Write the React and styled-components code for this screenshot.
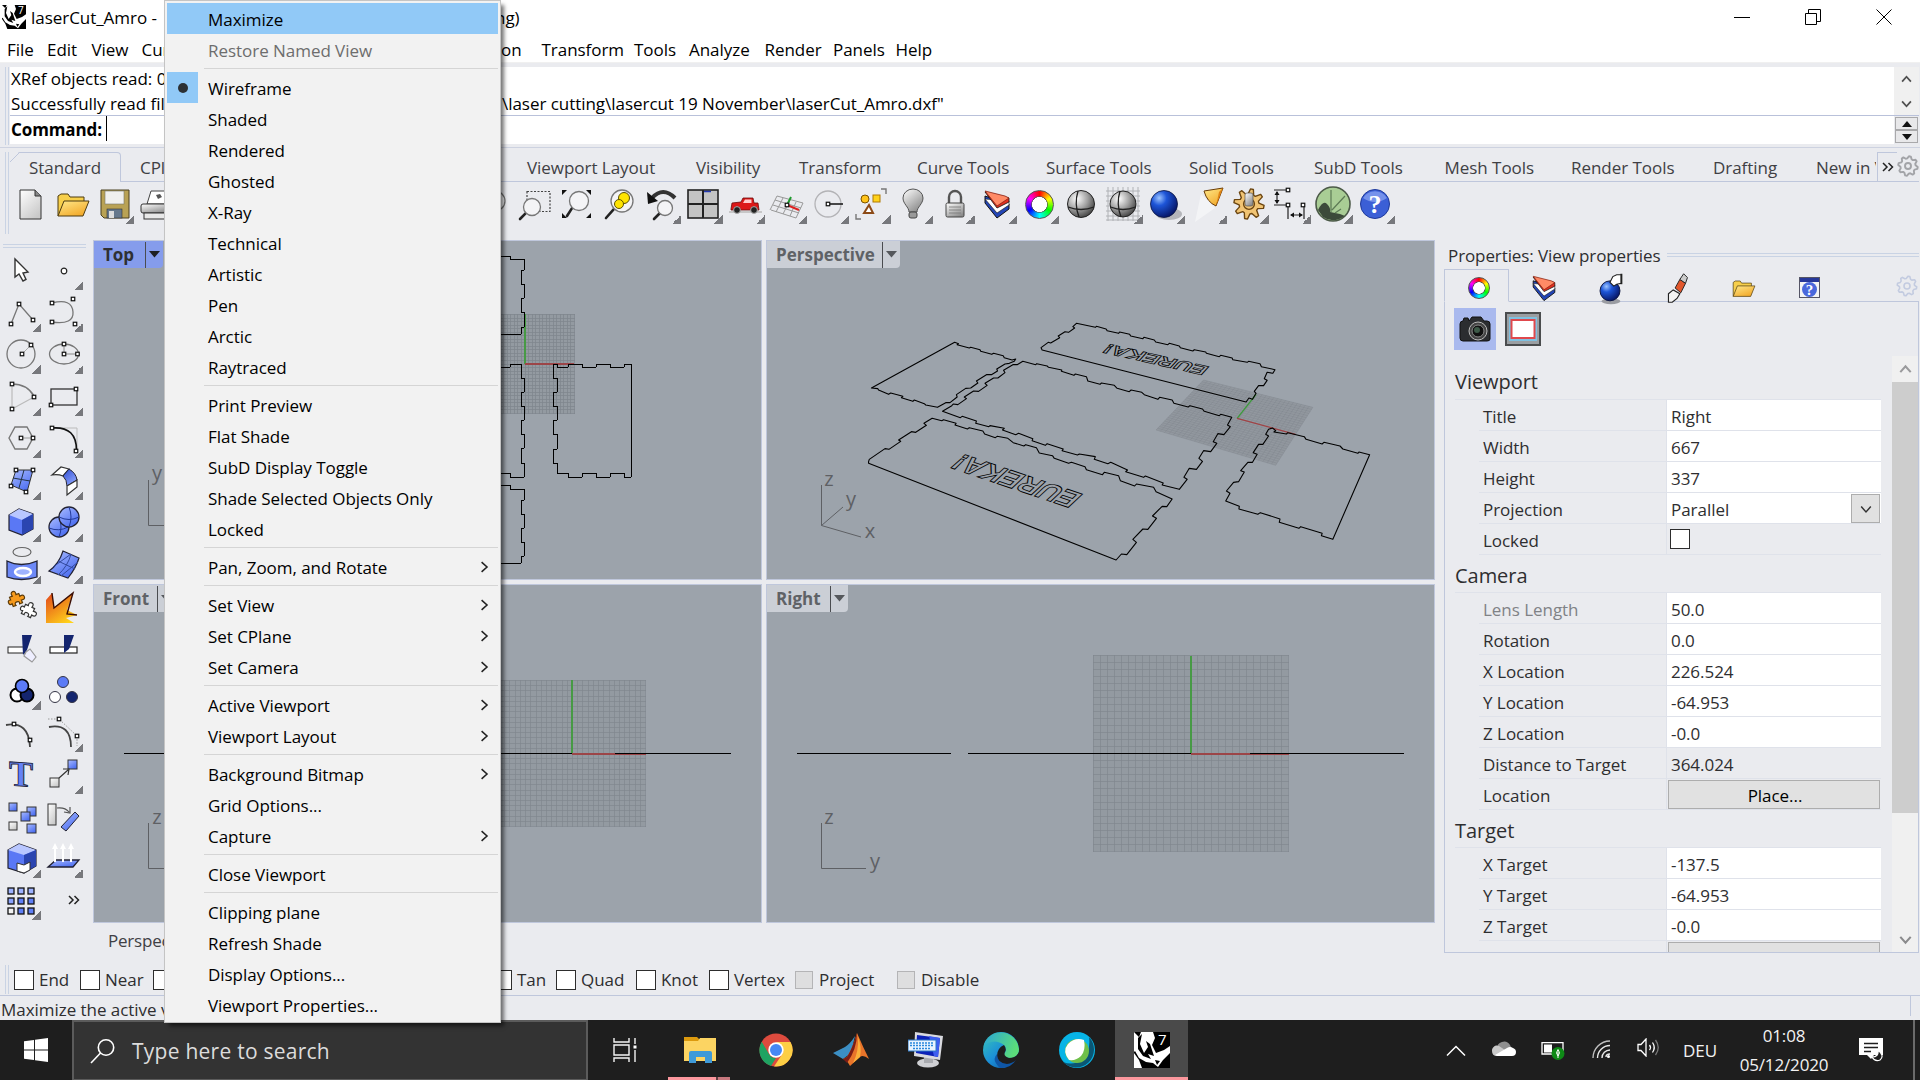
import React from "react";
import styled, { createGlobalStyle, css } from "styled-components";

const UI_FONT = `"Open Sans", "Noto Sans", "Liberation Sans", sans-serif`;
const LINE = "#bfc7dc";
const CHROME = "#eaebef";
const VIEW = "#9ca3ab";

const GlobalStyle = createGlobalStyle`
  * { box-sizing: border-box; }
  html, body { margin: 0; padding: 0; overflow: hidden; }
  body { font-family: ${UI_FONT}; font-size: 17px; letter-spacing: -0.04px; color: #2e2e30; background: ${CHROME}; }
`;

const Screen = styled.div`
  position: relative;
  width: 1920px;
  height: 1080px;
  overflow: hidden;
  display: flex;
  flex-direction: column;
  background: ${CHROME};
  white-space: nowrap;
`;

const Slot = styled.span`
  display: block;
  flex: none;
  width: ${(p) => p.$w}px;
  overflow: ${(p) => (p.$clip ? "hidden" : "visible")};
`;

/* ---------- title + menu bar ---------- */
const TitleBar = styled.header`
  height: 34px;
  flex: none;
  display: flex;
  align-items: center;
  padding-left: 2px;
  background: #fff;
  color: #000;
  gap: 5px;
`;
const TitleText = styled.div`
  display: flex;
  flex: 1;
`;
const WindowButtons = styled.div`
  display: flex;
  padding: 0 1px 1px 0;
  svg { display: block; margin: 0 27.5px; }
`;
const MenuBar = styled.nav`
  height: 29px;
  flex: none;
  display: flex;
  align-items: center;
  padding: 2px 0 0 7px;
  background: #fff;
  color: #000;
  border-bottom: 1px solid #f0f0f0;
`;

/* ---------- command area ---------- */
const CommandRow = styled.section`
  height: 85px;
  flex: none;
  display: flex;
  padding: 4px 1px 3px 5px;
  border-bottom: 1px solid #cdd2e0;
`;
const VGrip = styled.div`
  width: 4px;
  height: ${(p) => p.$h}px;
  flex: none;
  border-left: 1px solid #c9d3e4;
  border-right: 1px solid #c9d3e4;
`;
const CommandBox = styled.div`
  flex: 1;
  margin-left: 1px;
  color: #000;
`;
const History = styled.div`
  display: flex;
  height: 49px;
  border-bottom: 1px solid #b9c1da;
`;
const HistoryText = styled.div`
  flex: 1;
  background: #fff;
  padding-left: 1px;
  line-height: 23px;
`;
const HistoryLine = styled.div`
  display: flex;
  height: 25px;
`;
const ScrollArrows = styled.div`
  width: 25px;
  background: #f0f0f0;
  display: flex;
  flex-direction: column;
  align-items: center;
  justify-content: space-around;
`;
const Prompt = styled.div`
  display: flex;
  height: 28px;
  background: #fff;
`;
const PromptText = styled.div`
  flex: 1;
  display: flex;
  padding-left: 1px;
  font-weight: 700;
  line-height: 27px;
  letter-spacing: -0.1px;
`;
const Caret = styled.i`
  width: 1px;
  height: 25px;
  margin-left: 4px;
  background: #000;
`;
const Spin = styled.div`
  width: 25px;
  padding: 1px 1px 0;
  background: ${CHROME};
`;
const SpinButton = styled.div`
  height: 13px;
  display: flex;
  align-items: center;
  justify-content: center;
  background: #e8e8ea;
  border: 1px solid #a9a9ab;
`;

/* ---------- toolbar ---------- */
const ToolbarArea = styled.section`
  height: 92px;
  flex: none;
  display: flex;
  padding: 4px 1px 0 5px;
`;
const ToolbarBody = styled.div`
  flex: 1;
  margin-left: 1px;
`;
const TabRow = styled.div`
  height: 30px;
  display: flex;
  align-items: stretch;
  color: #404044;
  line-height: 31px;
`;
const ActiveTab = styled.div`
  width: 111px;
  padding-left: 19px;
  background: linear-gradient(135deg, transparent 6px, ${LINE} 6px, ${LINE} 7px, transparent 7px);
  border-top: 1px solid ${LINE};
  border-right: 1px solid ${LINE};
  border-radius: 0 4px 0 0;
  line-height: 29px;
  clip-path: polygon(9px 0, 100% 0, 100% 100%, 0 100%, 0 9px);
`;
const TabList = styled.div`
  flex: 1;
  display: flex;
  padding-left: 19px;
  border-bottom: 1px solid ${LINE};
`;
const TabMore = styled.div`
  width: 20px;
  border-left: 1px solid ${LINE};
  border-top: 1px solid ${LINE};
  display: flex;
  align-items: center;
  justify-content: center;
`;
const TabEnd = styled.div`
  display: flex;
  align-items: stretch;
  width: 42px;
  border-bottom: 1px solid ${LINE};
`;
const TabGear = styled.div`
  width: 22px;
  display: flex;
  align-items: center;
  padding-bottom: 2px;
`;
const IconRow = styled.div`
  display: flex;
  height: 42px;
  margin-top: 1px;
  margin-left: -1px;
`;
const ToolCell = styled.div`
  position: relative;
  width: ${(p) => p.$w || 42}px;
  height: 42px;
  flex: none;
  display: flex;
  align-items: center;
  justify-content: center;
  ${(p) =>
    p.$more &&
    css`
      &::after {
        content: "";
        position: absolute;
        right: 1px;
        bottom: 1px;
        width: 9px;
        height: 9px;
        background: linear-gradient(135deg, transparent 50%, #77787c 50%);
      }
    `}
`;

/* ---------- main ---------- */
const Main = styled.main`
  height: 718px;
  flex: none;
  display: flex;
`;
const SideTools = styled.aside`
  width: 93px;
  padding-top: 4px;
`;
const HGrip = styled.div`
  width: ${(p) => (p.$w ? p.$w + "px" : "auto")};
  flex: ${(p) => (p.$w ? "none" : 1)};
  height: 4px;
  border-top: 1px solid #c9d3e4;
  border-bottom: 1px solid #c9d3e4;
`;
const SideGrip = styled.div`
  padding-left: 3px;
  height: 5px;
`;
const SideGrid = styled.div`
  display: grid;
  grid-template-columns: 42px 42px;
`;
const Center = styled.div`
  width: 1342px;
`;
const Views = styled.div`
  display: grid;
  grid-template-columns: 669px 669px;
  grid-template-rows: 340px 339px;
  gap: 4px;
`;
const View = styled.div`
  position: relative;
  border: 1px solid ${LINE};
  background: ${VIEW};
  overflow: hidden;
  > svg { display: block; }
`;
const ViewTag = styled.div`
  position: absolute;
  left: 0;
  top: 0;
  height: 27px;
  display: flex;
  align-items: stretch;
  padding-left: 9px;
  line-height: 27px;
  font-weight: 700;
  letter-spacing: 0;
  border-radius: 0 0 4px 0;
  color: ${(p) => (p.$on ? "#2f3033" : "#5f6266")};
  background: ${(p) => (p.$on ? "#859cec" : "#cbcfd6")};
`;
const TagArrow = styled.span`
  width: 18px;
  margin-top: 1px;
  border-left: 1px solid #4a4c50;
  display: flex;
  justify-content: center;
  padding-top: 9px;
`;
const ViewTabs = styled.div`
  padding: 6px 0 0 15px;
  line-height: 24px;
  color: #404044;
  letter-spacing: -0.2px;
`;

/* ---------- properties ---------- */
const Props = styled.aside`
  width: 485px;
  display: flex;
  flex-direction: column;
  padding: 3px 1px 5px 9px;
`;
const PropsTitle = styled.div`
  height: 26px;
  display: flex;
  align-items: center;
  padding: 0 0 2px 4px;
  gap: 6px;
  flex: none;
  letter-spacing: -0.1px;
`;
const PropsTabs = styled.div`
  display: flex;
  height: 33px;
  flex: none;
`;
const PropsTab = styled.div`
  width: ${(p) => p.$w || 66}px;
  display: flex;
  align-items: center;
  justify-content: center;
  padding-top: 5px;
  border-bottom: 1px solid ${(p) => (p.$on ? "transparent" : LINE)};
  ${(p) =>
    p.$on &&
    css`
      border-top: 1px solid ${LINE};
      border-left: 1px solid ${LINE};
      border-right: 1px solid ${LINE};
      padding-left: 4px;
      padding-top: 4px;
    `}
`;
const PropsFill = styled.div`
  flex: 1;
  display: flex;
  justify-content: flex-end;
  align-items: center;
  border-bottom: 1px solid ${LINE};
  padding-top: 2px;
  padding-right: 1px;
`;
const PropsBody = styled.div`
  flex: 1;
  min-height: 0;
  border: 1px solid ${LINE};
  border-top: 0;
  display: flex;
  flex-direction: column;
`;
const ModeRow = styled.div`
  height: 54px;
  flex: none;
  padding: 6px 0 0 9px;
  display: flex;
  gap: 9px;
`;
const Mode = styled.div`
  width: ${(p) => (p.$on ? 42 : 36)}px;
  height: 42px;
  background: ${(p) => (p.$on ? "#a9b9ee" : "transparent")};
  display: flex;
  align-items: center;
  justify-content: center;
`;
const ScrollRow = styled.div`
  flex: 1;
  min-height: 0;
  display: flex;
`;
const Sheet = styled.div`
  flex: 1;
  overflow: hidden;
  padding: 5px 11px 0 10px;
`;
const Heading = styled.div`
  height: ${(p) => p.$h}px;
  line-height: ${(p) => p.$h + 3}px;
  font-size: 20px;
  border-bottom: 1px solid #dfe2ea;
`;
const Row = styled.div`
  height: 31px;
  margin-left: 24px;
  display: flex;
  border-bottom: 1px solid #dfe2ea;
`;
const Name = styled.div`
  width: 188px;
  padding-left: 4px;
  line-height: 33px;
  border-right: 1px solid #dfe2ea;
  color: ${(p) => (p.$dim ? "#808286" : "#2e2e30")};
`;
const Value = styled.div`
  flex: 1;
  padding-left: 4px;
  line-height: 33px;
  display: flex;
  background: ${(p) => (p.$plain ? "transparent" : "#fff")};
`;
const DropButton = styled.div`
  width: 29px;
  height: 29px;
  margin: 1px 1px 0 auto;
  background: #e1e1e1;
  border: 1px solid #adadad;
  display: flex;
  align-items: center;
  justify-content: center;
`;
const PlaceButton = styled.div`
  flex: 1;
  height: 29px;
  margin: 1px 1px 0 1px;
  padding-left: 2px;
  background: #e1e1e1;
  border: 1px solid #adadad;
  line-height: 30px;
  text-align: center;
  color: #000;
`;
const Check = styled.i`
  display: block;
  flex: none;
  width: ${(p) => (p.$dim ? 18 : 20)}px;
  height: ${(p) => (p.$dim ? 18 : 20)}px;
  border: 1px solid ${(p) => (p.$dim ? "#b4b4b6" : "#2d2d2d")};
  background: ${(p) => (p.$dim ? "#dededf" : "#fff")};
  margin: ${(p) => p.$m || 0};
`;
const Scrollbar = styled.div`
  width: 26px;
  background: #f0f0f0;
  display: flex;
  flex-direction: column;
  align-items: center;
`;
const ScrollEnd = styled.div`
  height: 26px;
  flex: none;
  display: flex;
  align-items: center;
`;
const Thumb = styled.div`
  width: 26px;
  height: 431px;
  background: #cdcdcd;
  margin-bottom: auto;
`;

/* ---------- bottom bars ---------- */
const SnapBar = styled.section`
  height: 38px;
  flex: none;
  display: flex;
  align-items: center;
  padding: 6px 0 0 5px;
  border-bottom: 1px solid ${LINE};
`;
const SnapItem = styled.div`
  width: ${(p) => p.$w}px;
  flex: none;
  display: flex;
  align-items: center;
  gap: ${(p) => (p.$dim ? 6 : 5)}px;
  height: 30px;
`;
const SnapList = styled.div`
  display: flex;
  padding-left: 5px;
`;
const StatusBar = styled.footer`
  height: 24px;
  flex: none;
  display: flex;
  padding-left: 1px;
  line-height: 28px;
  justify-content: space-between;
  padding-right: 9px;
`;
const StatusEnd = styled.i`
  width: 1px;
  height: 20px;
  background: ${LINE};
`;
const Taskbar = styled.footer`
  height: 60px;
  flex: none;
  display: flex;
  background: #1e1e1e;
  color: #f2f2f2;
`;
const TaskCell = styled.div`
  width: ${(p) => p.$w}px;
  flex: none;
  display: flex;
  align-items: center;
  justify-content: center;
  padding-top: 2px;
  background: ${(p) => (p.$on ? "#4a4a4a" : "transparent")};
  border-bottom: 3px solid ${(p) => (p.$on ? "#fb979d" : "transparent")};
`;
const GroupCell = styled(TaskCell)`
  border-bottom: 3px solid;
  border-image: linear-gradient(90deg, transparent 8px, #fb979d 8px, #fb979d 55px, #5c3d40 55px, #5c3d40 57px, #c7787e 57px, #c7787e 68px, transparent 68px) 1;
`;
const Search = styled.div`
  width: 516px;
  display: flex;
  align-items: center;
  padding-left: 16px;
  gap: 17px;
  font-size: 21px;
  letter-spacing: 0.25px;
  line-height: 32px;
  padding-top: 1px;
  color: #dcdcdc;
  background: #333;
  border: 2px solid #5b5b5b;
  border-bottom-width: 1px;
`;
const Tray = styled.div`
  margin-left: auto;
  display: flex;
  align-items: center;
`;
const TrayItem = styled(Slot)`
  padding-top: ${(p) => p.$drop || 0}px;
`;
const Clock = styled.div`
  width: 118px;
  text-align: center;
  line-height: 29px;
  letter-spacing: -0.15px;
`;
const DesktopEdge = styled.i`
  width: 7px;
  height: 60px;
  border-left: 2px solid #6a6a6a;
  background: #1e1e1e;
`;

/* ---------- context menu ---------- */
const Popup = styled.div`
  position: absolute;
  left: 164px;
  top: 0;
  width: 337px;
  height: 1023px;
  padding: 2px 2px 0 2px;
  background: #f2f2f2;
  border: 1px solid #c4c4c4;
  box-shadow: 4px 4px 4px -1px rgba(0, 0, 0, 0.55);
  color: #000;
`;
const PopupItem = styled.div`
  height: 31px;
  display: grid;
  grid-template-columns: 31px 1fr 20px;
  align-items: center;
  background: ${(p) => (p.$hot ? "#91c9f7" : "transparent")};
  color: ${(p) => (p.$dim ? "#6d6d6d" : "#000")};
`;
const PopupMark = styled.span`
  height: 31px;
  display: flex;
  align-items: center;
  justify-content: center;
  background: ${(p) => (p.$on ? "#91c9f7" : "transparent")};
`;
const PopupLabel = styled.span`
  padding: 1px 0 0 10px;
`;
const PopupRule = styled.div`
  height: 7px;
  margin-left: 37px;
  padding-top: 3px;
  &::after { content: ""; display: block; height: 1px; background: #d5d5d5; }
`;
const Dot = styled.i`
  width: 10px;
  height: 10px;
  border-radius: 50%;
  background: #2c3034;
`;

/* ---------- drawings ---------- */
const Wheel = styled.i`
  display: block;
  width: ${(p) => p.$d}px;
  height: ${(p) => p.$d}px;
  border-radius: 50%;
  border: 1px solid #555;
  background: radial-gradient(circle, #fff 0 ${(p) => p.$d * 0.25}px, #555 ${(p) => p.$d * 0.25 + 0.5}px, transparent ${(p) => p.$d * 0.25 + 1.5}px),
    conic-gradient(#f00, #ff0, #0f0, #0ff, #00f, #f0f, #f00);
`;

const Svg = ({ s = 40, children, ...rest }) => (
  <svg width={s} height={s} viewBox="-20 -20 40 40" fill="none" {...rest}>
    {children}
  </svg>
);

const Knob = ({ at }) => (
  <rect x={at[0] - 1.75} y={at[1] - 1.75} width="3.5" height="3.5" fill="#fff" stroke="#111" strokeWidth="1.2" />
);
const Knobs = ({ pts }) => pts.map((p, i) => <Knob key={i} at={p} />);

const Defs = styled.svg`
  position: absolute;
  width: 0;
  height: 0;
`;
const stops = {
  paper: ["#ffffff", "#c9c9c9"],
  gold: ["#ffe98a", "#f2a92a"],
  blue: ["#a9bbff", "#4a6cf0"],
  steel: ["#ffffff", "#8b8b8b"],
  fire: ["#e2451b", "#ffd21a"],
  deep: ["#2e4bd0", "#8ea6ff"],
};
const Gradients = () => (
  <Defs>
    <defs>
      {Object.entries(stops).map(([id, [a, b]]) => (
        <linearGradient key={id} id={id} x1="0" y1="0" x2="0.7" y2="1">
          <stop offset="0" stopColor={a} />
          <stop offset="1" stopColor={b} />
        </linearGradient>
      ))}
      <radialGradient id="ball" cx="0.35" cy="0.3" r="0.8">
        <stop offset="0" stopColor="#fff" />
        <stop offset="0.5" stopColor="#a0a0a0" />
        <stop offset="1" stopColor="#333" />
      </radialGradient>
      <radialGradient id="bluBall" cx="0.32" cy="0.28" r="0.8">
        <stop offset="0" stopColor="#9cc4ff" />
        <stop offset="0.35" stopColor="#1d55d8" />
        <stop offset="1" stopColor="#04105c" />
      </radialGradient>
      <linearGradient id="edge" x1="0" y1="0" x2="1" y2="1">
        <stop offset="0" stopColor="#37c7b8" />
        <stop offset="0.5" stopColor="#1b8fd8" />
        <stop offset="1" stopColor="#0c4f9e" />
      </linearGradient>
      <linearGradient id="edgeTop" x1="0" y1="0" x2="1" y2="0.3">
        <stop offset="0" stopColor="#2aa6d8" />
        <stop offset="1" stopColor="#5bdc7a" />
      </linearGradient>
    </defs>
  </Defs>
);

const RhinoLogo = ({ s }) => (
  <svg width={s} height={s} viewBox="0 0 36 36">
    <rect width="36" height="36" fill="#000" />
    <path d="M0 0L5 5L7 0H19L21 6L18 13L22 21L30 18L36 14V21L29 28L24 35L19 31L12 30L5 26L1 19L0 20Z" fill="#fff" />
    <path d="M4 6L8 2L6 12L10 21L14 15L12 9L16 12L18 18L20 24L14 22L17 27L9 24L4 17Z" fill="#000" />
    <path d="M21 28L26 29L23 33Z" fill="#000" />
    <path d="M0 21L5 28L8 36H0Z" fill="#fff" />
    <text x="24" y="13" fontSize="15" fontFamily="Open Sans" fill="#fff">7</text>
  </svg>
);

const Chevron = ({ dir, s = 9, color = "#505050", w = 1.6 }) => {
  const d = { up: "M1 7L5 2.5L9 7", down: "M1 3L5 7.5L9 3", right: "M3 1L7.5 5L3 9" }[dir];
  return (
    <svg width={s} height={s} viewBox="0 0 10 10" fill="none" stroke={color} strokeWidth={w}>
      <path d={d} />
    </svg>
  );
};
const Tri = ({ dir, color = "#111", w = 10 }) => (
  <svg width={w} height={w * 0.6} viewBox="0 0 10 6">
    <path d={dir === "up" ? "M0 6L5 0L10 6Z" : "M0 0L5 6L10 0Z"} fill={color} />
  </svg>
);
const DoubleChevron = () => (
  <svg width="12" height="10" viewBox="0 0 12 10" fill="none" stroke="#222" strokeWidth="1.5">
    <path d="M1 1L5 5L1 9M6.5 1L10.5 5L6.5 9" />
  </svg>
);
const Gear = ({ color, s = 22, fill = "none", w = 1.6, hole = 3, depth = 2.2 }) => {
  const pts = [];
  for (let i = 0; i < 32; i++) {
    const r = i % 4 < 2 ? 9.8 : 9.8 - depth;
    const a = ((i + 0.5) / 32) * Math.PI * 2;
    pts.push(`${(11 + r * Math.cos(a)).toFixed(2)},${(11 + r * Math.sin(a)).toFixed(2)}`);
  }
  return (
    <svg width={s} height={s} viewBox="0 0 22 22" fill={fill} stroke={color} strokeWidth={w} strokeLinejoin="round">
      <polygon points={pts.join(" ")} />
      <circle cx="11" cy="11" r={hole} />
    </svg>
  );
};
const Folder = ({ s = 40 }) => (
  <Svg s={s}>
    <path d="M-14 12V-8L-11 -10H-4L-2 -7H12V-3" fill="#f7cf4b" stroke="#4d3b10" />
    <path d="M-14 12L-8 -3H17L11 12Z" fill="url(#gold)" stroke="#4d3b10" />
  </Svg>
);
const Layers = ({ s = 40 }) => (
  <Svg s={s}>
    <path d="M-12 -1L0 14L12 5V0L-12 -8Z" fill="#2345b5" stroke="#111" />
    <path d="M-12 -5L0 9L12 1V-3Z" fill="#fff" stroke="#111" strokeWidth=".6" />
    <path d="M-12 -12L0 4L12 -2V-6Z" fill="#e03020" stroke="#111" strokeWidth=".8" />
    <path d="M-12 -13L8 -8L12 -6L0 2Z" fill="#ff8a66" stroke="#8a2010" strokeWidth=".8" />
  </Svg>
);
const lens = (cx, cy, r, hx, hy) => (
  <>
    <path d={`M${cx - r * 0.7} ${cy + r * 0.7}L${hx} ${hy}`} stroke="#222" strokeWidth="2.6" strokeLinecap="round" />
    <circle cx={cx} cy={cy} r={r} fill="#f4f4f6" stroke="#777" strokeWidth="1.3" />
  </>
);

const topIcons = {
  doc: (
    <Svg>
      <path d="M-10 -14H5L11 -8V15H-10Z" fill="url(#paper)" stroke="#333" />
      <path d="M5 -14V-8H11" fill="#888" stroke="#333" />
    </Svg>
  ),
  folder: <Folder />,
  save: (
    <Svg>
      <path d="M-13 -14H15V14H-10L-13 11Z" fill="#b9a254" stroke="#4a4020" />
      <rect x="-9" y="-13" width="19" height="13" fill="#f0f0ee" stroke="#776" strokeWidth=".6" />
      <rect x="-7" y="5" width="15" height="9" fill="#66788c" stroke="#333" strokeWidth=".6" />
      <rect x="-5" y="7" width="5" height="7" fill="#ddd" />
    </Svg>
  ),
  print: (
    <Svg>
      <path d="M-9 0L-5 -13H12V0Z" fill="#fff" stroke="#444" />
      <rect x="-15" y="0" width="30" height="9" rx="2" fill="url(#steel)" stroke="#333" />
      <rect x="-12" y="9" width="24" height="6" fill="#e8e8e8" stroke="#333" />
      <path d="M0 -9L4 -10L6 -7L2 -5Z" fill="#555" />
    </Svg>
  ),
  zoom: <Svg>{lens(2, -3, 10, -12, 14)}</Svg>,
  zoomWin: (
    <Svg>
      <rect x="-8" y="-12.5" width="23" height="20" stroke="#444" strokeDasharray="2 1.5" strokeWidth="1.2" />
      {lens(-3, 3, 8.5, -15, 15)}
    </Svg>
  ),
  zoomExt: (
    <Svg>
      {lens(2, -3, 9.5, -10, 12)}
      <path d="M-15 -14H-10L-15 -9ZM14 -14H9L14 -9ZM-15 14H-10L-15 9ZM14 14H9L14 9Z" fill="#111" />
    </Svg>
  ),
  zoomSel: (
    <Svg>
      {lens(3, -3, 11, -13, 14)}
      <circle cx="5" cy="-6" r="5.5" fill="#ffe400" stroke="#5d5200" />
      <circle cx="0" cy="0" r="4.5" fill="#ffe400" stroke="#5d5200" />
    </Svg>
  ),
  undoView: (
    <Svg>
      {lens(4, 4, 7.5, -7, 15)}
      <path d="M-9 -6Q2 -18 14 -6" stroke="#333" strokeWidth="4" />
      <path d="M-14 -12L-13 0L-3 -3Z" fill="#111" />
    </Svg>
  ),
  fourView: (
    <Svg>
      <rect x="-15" y="-14" width="30" height="28" fill="#c4c4c4" stroke="#222" strokeWidth="1.6" />
      <path d="M0 -14V14M-15 0H15" stroke="#222" strokeWidth="2" />
      <path d="M1 -12.5H8" stroke="#2338b0" strokeWidth="1.5" />
    </Svg>
  ),
  car: (
    <Svg>
      <path d="M-16 8H17" stroke="#bbb" strokeWidth="1.5" />
      <path d="M-14 5L-13 -1L-4 -2L-2 -6H8L9 -1H13L14 6H-14Z" fill="#dc1818" stroke="#6b0a0a" strokeWidth=".8" />
      <path d="M0 -4.5H6.500V-1H-2Z" fill="#fcc" />
      <circle cx="-8" cy="6" r="3.4" fill="#222" stroke="#aaa" />
      <circle cx="9" cy="6" r="3.4" fill="#222" stroke="#aaa" />
    </Svg>
  ),
  cplane: (
    <Svg>
      <g stroke="#999" strokeWidth="1">
        <path d="M-10 -8L16 -1M-12 -4L14 4M-14 1L12 9M-16 6L9 14M-10 -8L-17 6M-4 -6L-11 8M3 -4L-4 10M9 -2L3 12M16 -1L9 14" />
      </g>
      <path d="M0 1L4 -7" stroke="#1d9a2c" strokeWidth="2" />
      <path d="M0 1L12 6" stroke="#d22" strokeWidth="2" />
      <Knob at={[0, 1]} />
    </Svg>
  ),
  radius: (
    <Svg>
      <circle cx="-1" cy="0" r="13" stroke="#b3b3b6" strokeWidth="1.3" />
      <path d="M0 0H14" stroke="#111" strokeWidth="1.5" />
      <Knob at={[-1, 0]} />
    </Svg>
  ),
  select: (
    <Svg>
      <circle cx="-6" cy="-5" r="4" fill="#ffc41a" stroke="#7a5200" />
      <rect x="2" y="-9" width="7" height="7" fill="#ffd21a" stroke="#b07a00" />
      <path d="M-2 1L2 9H-7Z" fill="#fff" stroke="#8c4a16" strokeWidth="2" />
      <path d="M10 -15H15V-10M-15 10V15H-10" stroke="#777" strokeWidth="1.4" />
    </Svg>
  ),
  bulb: (
    <Svg>
      <path d="M-4 8C-4 3 -10 0 -10 -6A10 9 0 0 1 10 -6C10 0 4 3 4 8Z" fill="url(#steel)" stroke="#555" />
      <rect x="-4" y="8" width="8" height="6" rx="2" fill="#999" stroke="#444" />
    </Svg>
  ),
  lock: (
    <Svg>
      <path d="M-6 -1V-7A6 6 0 0 1 6 -7V-1" stroke="#555" strokeWidth="2.4" />
      <rect x="-9" y="-1" width="18" height="14" rx="1.5" fill="url(#steel)" stroke="#444" />
      <path d="M-6 3H6M-6 6H6M-6 9H6" stroke="#777" strokeWidth=".8" />
    </Svg>
  ),
  layers: <Layers />,
  wheel: <Wheel $d={29} />,
  ball: (
    <Svg>
      <circle r="13.5" fill="url(#ball)" stroke="#222" />
      <path d="M-13 3Q0 8 13 3M-3 -13Q-7 0 -2 13" stroke="#222" strokeWidth="1.3" />
    </Svg>
  ),
  ballGrid: (
    <Svg>
      <path d="M-17 -13H17M-17 -8H17M-17 -3H17M-17 2H17M-17 7H17M-17 12H17M-17 16H17M-15 -17V17M-10 -17V17M-5 -17V17M0 -17V17M5 -17V17M10 -17V17M15 -17V17" stroke="#b0b2b6" strokeWidth="1" />
      <circle r="13" fill="url(#ball)" stroke="#222" />
      <path d="M-12.500 3Q0 8 12.500 3M-3 -13Q-7 0 -2 13" stroke="#222" strokeWidth="1.3" />
    </Svg>
  ),
  blueBall: (
    <Svg>
      <ellipse cx="4" cy="10" rx="13" ry="6" fill="#8f9196" opacity=".6" />
      <circle cx="-1" r="13.500" fill="url(#bluBall)" stroke="#0a1440" strokeWidth=".8" />
    </Svg>
  ),
  spot: (
    <Svg>
      <path d="M-6 -10L8 4L-12 18Z" fill="#fff" opacity=".45" />
      <path d="M-3 -13L16 -16L9 2Q0 -2 -3 -13Z" fill="url(#gold)" stroke="#6b3b05" />
      <path d="M16 -16L9 2L12 -12Z" fill="#e08414" />
    </Svg>
  ),
  gear: (
    <Svg>
      <foreignObject x="-17" y="-17" width="34" height="34">
        <Gear color="#6b4510" fill="#f1c473" s={34} w={0.9} hole={3.5} depth={3.4} />
      </foreignObject>
      <rect x="-4" y="-11" width="8" height="13" rx="2" fill="url(#steel)" stroke="#555" strokeWidth=".7" />
    </Svg>
  ),
  dims: (
    <Svg>
      <path d="M-17 -14H-3M-17 1H-3M-3 2V15M13 2V15M-14 -12V-1M0 11H11" stroke="#222" strokeWidth="1.2" />
      <path d="M-14 -13L-16.500 -9H-11.500ZM-14 0L-16.500 -4H-11.500ZM-1 11L3 8.500V13.500ZM12 11L8 8.500V13.500Z" fill="#111" />
      <Knobs pts={[[-3, -14], [-3, 1], [12, 1]]} />
    </Svg>
  ),
  hopper: (
    <Svg>
      <circle r="17" fill="#a9cd95" stroke="#4c5a48" strokeWidth="1.6" />
      <path d="M-15 6Q-10 -4 -6 0Q-2 4 -3 8L7 10L12 12Q0 20 -10 13Z" fill="#3c4a3a" />
      <path d="M-1 6L12 -8M-2 8V-14M2 9L8 5" stroke="#5d7a55" strokeWidth="1.2" />
    </Svg>
  ),
  help: (
    <Svg>
      <circle r="14.500" fill="#3b5fd6" stroke="#1f3a9a" />
      <path d="M-12 -6A14 14 0 0 1 12 -6Q0 2 -12 -6Z" fill="#8fa8f4" opacity=".7" />
      <text x="0" y="9" textAnchor="middle" fontSize="26" fontWeight="700" fontFamily="Liberation Serif" fill="#fff">?</text>
    </Svg>
  ),
};
const topRow = [
  ["doc"], ["folder"], ["save", 1], ["print"],
  [null, 0, 295], ["zoom"], ["zoomWin"], ["zoomExt"], ["zoomSel"],
  ["undoView", 1], ["fourView", 1], ["car", 1], ["cplane", 1], ["radius", 1], ["select", 1],
  ["bulb", 1], ["lock", 1], ["layers", 1], ["wheel", 1], ["ball"], ["ballGrid", 1], ["blueBall", 1],
  ["spot", 1], ["gear", 1], ["dims", 1], ["hopper", 1], ["help", 1],
];

const navy = "#14256f";
const sq = (x, y, f = "url(#blue)", s = 9) => <rect key={`${x},${y}`} x={x} y={y} width={s} height={s} fill={f} stroke="#333" strokeWidth="1" />;
const g = "#777";
const puzzle = "M-5 -5H-2Q-3 -9 0 -9Q3 -9 2 -5H5V-2Q9 -3 9 0Q9 3 5 2V5H2Q3 2 0 2Q-3 2 -2 5H-5V2Q-8 3 -8 0Q-8 -3 -5 -2Z";
const sideIcons = [
  [<path d="M-6 -11V7L-2 4L2 11L5 9.500L2 3L7 2Z" fill="#fff" stroke="#333" strokeWidth="1.4" />],
  [<circle cx="1" cy="1" r="2.800" fill="#fff" stroke="#222" strokeWidth="1.2" />, 1],
  [<><path d="M-10 12L-2 -8L12 8" stroke={g} strokeWidth="1.3" /><Knobs pts={[[-10, 12], [-2, -8], [12, 8]]} /></>, 1],
  [<><path d="M-11 -9Q9 -14 10 0Q11 13 -11 10" stroke={g} strokeWidth="1.3" /><Knobs pts={[[-11, -9], [10, -13], [-11, 10], [12, 12]]} /></>, 1],
  [<><circle cx="0" cy="0" r="14" stroke={g} strokeWidth="1.3" /><path d="M1 0L10 -9" stroke="#aaa" /><Knobs pts={[[1, 0], [10, -9]]} /></>, 1],
  [<><ellipse cx="1" cy="0" rx="14.500" ry="10" stroke={g} strokeWidth="1.3" /><path d="M1 -10V0H14" stroke="#888" /><Knobs pts={[[1, -10], [1, 0], [14.500, 0]]} /></>, 1],
  [<><path d="M-9 -12V13L13 1" stroke="#bbb" strokeWidth="1.2" /><path d="M-9 -12Q6 -12 13 0" stroke={g} strokeWidth="1.5" /><Knobs pts={[[-9, -12], [-9, 13], [13, 1]]} /></>, 1],
  [<><rect x="-12" y="-7" width="26" height="16" stroke="#333" strokeWidth="1.3" /><Knobs pts={[[13, -7], [-12, 9]]} /></>, 1],
  [<><path d="M-12 0L-6 -11H6L12 0L6 11H-6Z" stroke={g} strokeWidth="1.4" /><path d="M0 0H12" stroke="#999" /><Knobs pts={[[0, 0], [12, 0]]} /></>, 1],
  [<><path d="M-11 -10H14V12" stroke="#bbb" /><path d="M-11 -10Q14 -12 13.500 13" stroke="#111" strokeWidth="1.700" /><Knobs pts={[[-11, -10], [13, 13]]} /></>, 1],
  [<><path d="M-5 -10H12L6 12L-10 5Z" fill="url(#blue)" stroke="#333" /><path d="M3 -10L-2 8M-8 -2L9 1" stroke="#234" /><Knobs pts={[[-5, -10], [12, -10], [-10, 6], [5, 12]]} /></>, 1],
  [<><path d="M-11 -5L-2 -13L6 -11L0 -4Q-5 -6 -11 -5Z" fill="#fff" stroke="#333" strokeWidth="1.200" /><path d="M0 -4L6 -11Q13 -7 14 0L4 6Q4 0 0 -4Z" fill="url(#deep)" stroke="#223" /><path d="M4 6L14 0V7L4 15Z" fill="#fff" stroke="#333" strokeWidth="1.200" /></>, 1],
  [<><path d="M-12 -7L-2 -13L12 -8V7L1 13L-12 8Z" fill="#5a78f5" stroke="#223" strokeWidth="1.2" /><path d="M-12 -7L-2 -13L12 -8L1 -2Z" fill="#b9c7ff" /><path d="M1 -2L12 -8V7L1 13Z" fill="#2b45b0" /></>, 1],
  [<><circle cx="-4" cy="5" r="10" fill="url(#blue)" stroke="#223" strokeWidth="1.3" /><path d="M-4 -5Q0 5 -4 15M-14 6Q-4 10 5 5" stroke="#223a9a" /><circle cx="6" cy="-5" r="10" fill="url(#blue)" stroke="#223" strokeWidth="1.3" /><path d="M6 -15Q10 -5 6 5M-4 -5Q6 0 16 -5" stroke="#223a9a" /></>, 1],
  [<><ellipse cx="1" cy="-12" rx="9" ry="4.500" stroke="#666" strokeWidth="1.2" /><path d="M-14 -3Q0 4 16 -3V13Q0 18 -14 13Z" fill="#6d89f7" stroke="#223" strokeWidth="1.3" /><ellipse cx="2" cy="8" rx="8" ry="4" stroke="#fff" strokeWidth="2.5" fill="#9fb3ff" /></>, 1],
  [<><path d="M0 -13L16 -6Q13 4 5 14L-14 7Q-4 0 0 -13Z" fill="url(#blue)" stroke="#223" strokeWidth="1.2" /><path d="M8 -10Q5 2 -5 11M-5 -3L12 5M-10 3L8 -10M-2 12L15 -2" stroke="#334a9f" /></>, 1],
  [<><path d={puzzle} transform="translate(-5 -6) rotate(-22)" fill="#f79a1c" stroke="#5b3a08" strokeWidth="1.2" /><path d={puzzle} transform="translate(7 5) rotate(25)" fill="#fff" stroke="#333" strokeWidth="1.2" /></>],
  [<><path d="M-17 17V-6L-11 -13L-9 2L10 -13L4 4L14 9L3 12L11 17Z" fill="url(#fire)" /><path d="M-11 -13L-9 2L10 -13L4 8L14 9" stroke="#3a0d04" strokeWidth="1.4" /></>],
  [<><rect x="-13" y="-1" width="17" height="6" fill="#fff" stroke="#222" /><path d="M1 -13H11L6 2L2 7Z" fill={navy} /><path d="M5 4L9 1L15 9L11 14L3 8Z" fill="#eef" stroke="#999" strokeWidth="1.2" /></>],
  [<><rect x="-13" y="-1" width="27" height="6" fill="#fff" stroke="#222" strokeWidth="1.2" /><path d="M1 -13H11L6 1L1 5Z" fill={navy} /></>],
  [<><circle cx="-4" cy="5" r="6.500" fill="#fff" stroke="#000" strokeWidth="2" /><circle cx="6" cy="5" r="6.500" fill={navy} stroke="#000" strokeWidth="2" /><circle cx="1" cy="-4" r="6.500" fill="#5c7bf7" stroke="#000" strokeWidth="1.6" /></>, 1],
  [<><circle cx="0" cy="-8" r="5.500" fill="#5c7bf7" stroke="#334" /><circle cx="-8" cy="7" r="5.500" fill="#fff" stroke="#334" /><circle cx="9" cy="7" r="5.500" fill={navy} stroke="#334" /></>],
  [<><path d="M-15 -7Q8 -11 9 15" stroke="#444" strokeWidth="1.8" /><Knobs pts={[[-7, -8], [9, 8]]} /></>],
  [<><path d="M-14 -5Q8 -9 8 15" stroke="#444" strokeWidth="1.8" /><path d="M-15 -13H-4L14 4V14" stroke="#999" strokeDasharray="1.500 1.500" /><Knobs pts={[[-4, -13], [14, 4]]} /></>, 1],
  [<text x="0" y="12" textAnchor="middle" fontFamily="Liberation Serif" fontSize="36" fontWeight="700" fill="#6482f7" stroke="#223" strokeWidth=".9" transform="skewY(4)">T</text>],
  [<>{sq(5, -14)}{sq(-13, 4, "url(#paper)")}<path d="M-4 4L5 -4M0 -5L6 -5L5 1" stroke="#333" strokeWidth="1.200" /></>, 1],
  [<>{sq(-12, -13, "url(#blue)", 8)}{sq(6, -9, "url(#blue)", 9)}{sq(0, -4, "url(#blue)", 9)}{sq(-12, 6, "url(#paper)", 8)}{sq(6, 8, "url(#blue)", 9)}</>],
  [<><rect x="-15" y="-12" width="8" height="21" fill="url(#paper)" stroke="#333" /><path d="M-6 -8Q2 -9 6 -4M7 -9L7 -3L1 -4" stroke="#555" strokeWidth="1.200" /><path d="M-2 11L12 -4L16 0L3 15Z" fill="url(#blue)" stroke="#223" /></>],
  [<><path d="M-13 -8L-2 -14L15 -8V8L3 15L-13 10Z" fill="#5a78f5" stroke="#223" strokeWidth="1.200" /><path d="M-13 -8L-2 -14L15 -8L3 -3Z" fill="#b9c7ff" /><path d="M3 -3L15 -8V8L3 15Z" fill="#2b45b0" /><path d="M-4 5L3 7L9 4V12L3 15L-4 13Z" fill="#fff" stroke="#333" /></>, 1],
  [<><path d="M-15 9L-7 2H16L10 9Z" fill="url(#blue)" stroke="#223" strokeWidth="1.300" /><path d="M-8 4V-13M0 4V-13M8 4V-13" stroke="#fff" strokeWidth="2" /><path d="M-11 -9L-8 -15L-5 -9ZM-3 -9L0 -15L3 -9ZM5 -9L8 -15L11 -9Z" fill="#fff" /></>, 1],
  [<>{[0, 1, 2].flatMap((r) => [0, 1, 2].map((c) => <rect key={`${r}${c}`} x={-13 + c * 10} y={-12 + r * 10} width="6" height="6" fill={r === 2 && c === 0 ? "#f2f2f2" : r === 0 ? "#9db2ff" : c === 0 ? "#8aa2fb" : "#5f7ff5"} stroke="#111" strokeWidth="1.300" />))}</>, 1],
];

/* ---------- viewports ---------- */
const gridPath = (x0, y0, x1, y1, n = 28) => {
  let d = "";
  for (let i = 0; i <= n; i++) {
    const x = Math.round(x0 + ((x1 - x0) * i) / n) + 0.5;
    const y = Math.round(y0 + ((y1 - y0) * i) / n) + 0.5;
    d += `M${x} ${y0}V${y1 + 1}M${x0} ${y}H${x1 + 1}`;
  }
  return d;
};
const FlatGrid = ({ box: [x0, y0, x1, y1], o = 0.75 }) => (
  <>
    <rect x={x0} y={y0} width={x1 - x0} height={y1 - y0} fill="#939aa1" />
    <path d={gridPath(x0, y0, x1, y1)} stroke="#7f858d" strokeWidth="1" opacity={o} />
  </>
);
const Scene = ({ x, y, h, children }) => (
  <svg width="667" height={h} viewBox={`${x} ${y} 667 ${h}`} fill="none">
    {children}
  </svg>
);
const AxisText = ({ x, y, children }) => (
  <text x={x} y={y} fontSize="20" fill="#5e6064" textAnchor="middle">
    {children}
  </text>
);

const TopScene = () => (
  <Scene x={94} y={241} h={338}>
    <FlatGrid box={[475, 314, 574, 413]} />
    <path d="M525 314V364" stroke="#479a45" strokeWidth="2" />
    <path d="M525 364H574" stroke="#9c4548" strokeWidth="2" />
    <g transform="translate(490 240) scale(.33333)" stroke="#000" strokeWidth="3" shapeRendering="crispEdges">
      <path d="M0 49H61V58H103V91H94V133H103V175H94V217H103V262H94V283H0" />
      <path d="M0 382H61V373H94V415H103V457H94V499H103V541H94V583H103V625H94V670H103V712H61V700H0" />
      <path d="M0 736H61V748H103V781H94V823H103V865H94V907H103V949H94V970H0" />
      <path d="M190 373H202V382H235V373H277V382H319V373H361V382H403V373H424V712H403V700H361V712H319V700H277V712H235V700H202V670H190V628H202V583H190V541H202V499H190V457H202V415H190Z" />
    </g>
    <path d="M148.500 480V525.500H195" stroke="#5e6064" />
    <AxisText x={157} y={480}>y</AxisText>
  </Scene>
);

const corners = [[1018, 240], [1324, 322], [1220, 496], [885, 390]];
const mix = (a, b, t) => [a[0] + (b[0] - a[0]) * t, a[1] + (b[1] - a[1]) * t];
const planeGrid = () => {
  const [a, b, c, e] = corners;
  let d = "";
  for (let i = 0; i <= 28; i++) {
    const t = i / 28;
    d += `M${mix(a, b, t).join(" ")}L${mix(e, c, t).join(" ")}M${mix(a, e, t).join(" ")}L${mix(b, c, t).join(" ")}`;
  }
  return d;
};
const panels = [
  "563,143 583,127 590,129 615,113 611,108 630,95 640,97 657,84 652,80 662,70 715,82 718,79 745,87 748,92 780,100 783,96 811,103 814,108 848,116 851,112 880,120 884,126 918,134 922,130 950,138 953,143 988,153 992,149 1024,156 1026,160 1062,170 1066,166 1098,174 1100,179 1140,187 1144,184 1176,191 1180,200 1218,209 1212,220 1196,217 1188,236 1196,241 1186,257 1172,257 1160,274 1165,280 1155,298 1145,294 1137,306 566,150",
  "88,264 321,127 332,131 328,134 362,144 366,142 392,149 394,154 425,163 430,160 457,167 460,173 482,180 492,177 488,184 474,190 462,192 439,207 441,213 424,224 410,224 382,243 386,249 366,264 352,265 326,284 328,291 308,308 296,308 273,322 240,315 236,311 208,300 204,304 172,293 176,289 142,279 136,283 108,270 106,266",
  "287,334 313,317 317,312 330,314 354,296 348,291 374,273 388,274 412,256 406,250 430,234 442,234 462,218 458,211 484,194 496,194 512,184 548,194 551,191 580,198 584,202 621,210 620,214 655,226 659,222 690,230 694,243 728,253 732,249 768,256 776,265 810,275 815,270 845,277 852,284 890,298 895,292 930,300 935,310 975,321 980,317 1015,327 1020,334 1062,347 1066,343 1097,352 1085,375 1093,380 1075,404 1058,401 1045,425 1055,430 1038,455 1018,452 1005,475 1015,484 998,508 978,505 963,532 972,538 950,568 902,555 905,549 855,528 850,532 800,515 805,510 758,487 750,491 712,478 715,470 670,462 665,465 622,452 625,447 580,431 575,436 538,422 540,416 500,400 492,404 455,390 460,385 420,377 417,380 380,370 382,363 342,349 337,353",
  "80,485 82,478 126,446 137,448 170,424 164,420 200,395 212,397 242,376 235,370 258,355 285,362 290,359 325,370 322,375 357,387 362,383 400,393 405,402 435,413 440,409 470,415 485,428 515,438 520,434 550,443 558,459 595,467 600,475 640,490 648,487 686,500 690,509 735,524 740,517 780,527 785,542 825,558 830,552 878,562 885,575 930,597 915,620 902,619 875,648 886,655 862,688 848,687 820,718 830,727 803,764 788,762 773,780 80,490",
  "1211,384 1220,392 1215,396 1250,402 1254,398 1300,410 1305,418 1350,432 1355,427 1400,438 1408,447 1450,460 1453,456 1483,464 1380,718 1348,707 1350,700 1290,680 1285,685 1230,667 1232,657 1177,638 1170,643 1117,627 1118,619 1080,603 1092,580 1082,573 1102,547 1116,545 1132,516 1122,512 1142,487 1155,487 1168,463 1157,458 1172,433 1184,433 1200,408 1192,403 1200,388",
];
const Engraving = ({ matrix }) => (
  <text transform={`matrix(${matrix})`} fontFamily="Liberation Sans" fontWeight="700" fontSize="10" textLength="48" lengthAdjust="spacingAndGlyphs" stroke="#000" strokeWidth=".9" vectorEffect="non-scaling-stroke">
    EUREKA!
  </text>
);
const PerspectiveScene = () => (
  <Scene x={767} y={241} h={338}>
    <g transform="translate(840 300) scale(.35714 .33333)">
      <polygon points={corners.map((c) => c.join()).join(" ")} fill="#92989f" />
      <path d={planeGrid()} stroke="#7d838b" strokeWidth="1.800" opacity=".6" />
      <path d="M1112 355L1165 283" stroke="#3f9a3d" strokeWidth="4" />
      <path d="M1112 355L1275 403" stroke="#a04346" strokeWidth="4" />
      {panels.map((p) => (
        <polygon key={p.slice(0, 8)} points={p} stroke="#000" strokeWidth="1.100" vectorEffect="non-scaling-stroke" strokeLinejoin="round" />
      ))}
      <Engraving matrix="-5.95 -1.450 3.050 -3.600 1037 201" />
      <Engraving matrix="-7.100 -2.560 5.800 -5.800 684 584" />
    </g>
    <path d="M821.500 485V525.500L861 537M821.500 525.500L843 507" stroke="#5e6064" />
    <AxisText x={829} y={486}>z</AxisText>
    <AxisText x={851} y={506}>y</AxisText>
    <AxisText x={870} y={538}>x</AxisText>
  </Scene>
);
const FrontScene = () => (
  <Scene x={94} y={585} h={337}>
    <FlatGrid box={[499, 680, 645, 826]} o={0.65} />
    <path d="M572 680V753" stroke="#479a45" strokeWidth="2" />
    <path d="M572 754H646" stroke="#9c4548" strokeWidth="2" />
    <path d="M124 753.500H572M615 753.500H731" stroke="#000" />
    <path d="M148.500 823V868.500H195" stroke="#5e6064" />
    <AxisText x={157} y={824}>z</AxisText>
  </Scene>
);
const RightScene = () => (
  <Scene x={767} y={585} h={337}>
    <FlatGrid box={[1093, 655, 1288, 851]} o={0.65} />
    <path d="M1191 656V753" stroke="#479a45" strokeWidth="2" />
    <path d="M1191 754H1289" stroke="#9c4548" strokeWidth="2" />
    <path d="M797 753.500H951M968 753.500H1191M1250 753.500H1404" stroke="#000" />
    <path d="M821.500 823V868.500H866" stroke="#5e6064" />
    <AxisText x={829} y={824}>z</AxisText>
    <AxisText x={875} y={868}>y</AxisText>
  </Scene>
);
const ViewPane = ({ name, w, on, children }) => (
  <View>
    {children}
    <ViewTag $on={on}>
      <Slot $w={w}>{name}</Slot>
      <TagArrow>
        <Tri dir="down" w={11} color={on ? "#1f2023" : "#55585c"} />
      </TagArrow>
    </ViewTag>
  </View>
);

/* ---------- data ---------- */
const menus = [["File", 40], ["Edit", 44.5], ["View", 50], ["Curve", 295], ["Dimension", 105], ["Transform", 92.500], ["Tools", 55], ["Analyze", 75.500], ["Render", 68.500], ["Panels", 62.500], ["Help", 40]];
const tabs = [["CPlanes", 387], ["Viewport Layout", 169], ["Visibility", 103], ["Transform", 118], ["Curve Tools", 129], ["Surface Tools", 143], ["Solid Tools", 125], ["SubD Tools", 130.500], ["Mesh Tools", 126.500], ["Render Tools", 142], ["Drafting", 103]];
const context = [
  ["Maximize", "hot"], ["Restore Named View", "dim"], null,
  ["Wireframe", "on"], ["Shaded"], ["Rendered"], ["Ghosted"], ["X-Ray"], ["Technical"], ["Artistic"], ["Pen"], ["Arctic"], ["Raytraced"], null,
  ["Print Preview"], ["Flat Shade"], ["SubD Display Toggle"], ["Shade Selected Objects Only"], ["Locked"], null,
  ["Pan, Zoom, and Rotate", "sub"], null,
  ["Set View", "sub"], ["Set CPlane", "sub"], ["Set Camera", "sub"], null,
  ["Active Viewport", "sub"], ["Viewport Layout", "sub"], null,
  ["Background Bitmap", "sub"], ["Grid Options..."], ["Capture", "sub"], null,
  ["Close Viewport"], null,
  ["Clipping plane"], ["Refresh Shade"], ["Display Options..."], ["Viewport Properties..."],
];
const sections = [
  ["Viewport", 39, [["Title", "Right"], ["Width", "667"], ["Height", "337"], ["Projection", "Parallel", "drop"], ["Locked", "", "check"]]],
  ["Camera", 38, [["Lens Length", "50.0", "dim"], ["Rotation", "0.0"], ["X Location", "226.524"], ["Y Location", "-64.953"], ["Z Location", "-0.0"], ["Distance to Target", "364.024", "plain"], ["Location", "", "button"]]],
  ["Target", 38, [["X Target", "-137.5"], ["Y Target", "-64.953"], ["Z Target", "-0.0"], ["Location", "", "button"]]],
];
const snaps = [["End", 66], ["Near", 73], ["Point", 339], ["Tan", 64], ["Quad", 80], ["Knot", 73], ["Vertex", 86], ["Project", 102, 1], ["Disable", 100, 1]];

const PropertyRow = ({ row: [name, value, kind] }) => (
  <Row>
    <Name $dim={kind === "dim"}>{name}</Name>
    {kind === "button" ? (
      <PlaceButton>Place...</PlaceButton>
    ) : (
      <Value $plain={kind === "plain" || kind === "check"}>
        {value}
        {kind === "drop" && (
          <DropButton>
            <Chevron dir="down" s={12} w={1.200} color="#333" />
          </DropButton>
        )}
        {kind === "check" && <Check $m="5px 0 0 -1px" />}
      </Value>
    )}
  </Row>
);

const ContextMenu = () => (
  <Popup>
    {context.map((it, i) =>
      it ? (
        <PopupItem key={i} $hot={it[1] === "hot"} $dim={it[1] === "dim"}>
          <PopupMark $on={it[1] === "on"}>{it[1] === "on" && <Dot />}</PopupMark>
          <PopupLabel>{it[0]}</PopupLabel>
          {it[1] === "sub" && <Chevron dir="right" s={12} w={1.300} color="#222" />}
        </PopupItem>
      ) : (
        <PopupRule key={i} />
      )
    )}
  </Popup>
);

const HelpWindow = () => (
  <svg width="21" height="21" viewBox="0 0 21 21">
    <rect x=".5" y=".5" width="20" height="20" fill="#f4f4f4" stroke="#556" />
    <rect x="1" y="1" width="19" height="4" fill="#27389a" />
    <circle cx="10.500" cy="12.500" r="7.500" fill="#4a68dc" />
    <text x="10.500" y="18" textAnchor="middle" fontSize="15" fontWeight="700" fontFamily="Liberation Serif" fill="#fff">?</text>
  </svg>
);
const Material = () => (
  <Svg s={38}>
    <ellipse cx="1" cy="14" rx="10" ry="3" fill="#9a9ca2" />
    <circle cx="0" cy="3" r="10.500" fill="url(#bluBall)" stroke="#0a1440" />
    <path d="M0 -6L3 -12L7 -14H12V-5L7 -4L4 -2Z" fill="#fff" stroke="#222" strokeWidth="1.200" />
    <path d="M12 -15V-4" stroke="#222" strokeWidth="2" />
  </Svg>
);
const Tube = () => (
  <Svg s={38}>
    <path d="M-9 6L-4 2L3 6L0 11L-5 15H-9Z" fill="#f4f4f4" stroke="#222" strokeWidth="1.200" />
    <path d="M-2 0L3 -9L9 -5L4 5Z" fill="#e2572c" stroke="#222" />
    <path d="M3 -9L7 -15L11 -11L9 -5Z" fill="#ccc" stroke="#222" />
  </Svg>
);
const Camera = () => (
  <svg width="32" height="28" viewBox="0 0 32 28">
    <path d="M1 9Q1 6 4 6L5 3H9L10 6L13 2H22L25 6H28Q31 6 31 9V24Q31 26 28 26H4Q1 26 1 23Z" fill="#2b2d30" stroke="#111" />
    <circle cx="19" cy="16" r="9" fill="#444" stroke="#bbb" strokeWidth="1" />
    <circle cx="19" cy="16" r="6" fill="#111" stroke="#888" />
    <circle cx="18" cy="15" r="3" fill="#3d5a48" />
  </svg>
);
const Frame = () => (
  <svg width="36" height="34" viewBox="0 0 36 34">
    <rect x="1" y="1" width="34" height="32" fill="#9a9ea2" stroke="#4a4c4e" strokeWidth="2" />
    <rect x="4" y="5" width="28" height="24" fill="#7fc0e0" />
    <rect x="6.500" y="8" width="23" height="18" fill="#fff" stroke="#e0484c" strokeWidth="2" />
  </svg>
);

const task = {
  view: (
    <svg width="24" height="24" viewBox="0 0 24 24" fill="none" stroke="#f4f4f4" strokeWidth="1.400">
      <path d="M1 0V4H16V0M1 24V20H16V24M1 7H16V17H1ZM22 0V6M22 12V24" />
      <rect x="20.500" y="7.500" width="3" height="3" fill="#fff" stroke="none" />
    </svg>
  ),
  files: (
    <svg width="32" height="28" viewBox="0 0 32 28">
      <path d="M0 1H13L16 4V8H0Z" fill="#dc9a0e" />
      <path d="M0 5H14L16 2H32V25H0Z" fill="#fcd462" />
      <path d="M5 27V17Q5 15 7 15H26Q28 15 28 17V27H21V21H12V27Z" fill="#3f9ad8" />
    </svg>
  ),
  chrome: (
    <svg width="34" height="34" viewBox="0 0 34 34">
      <circle cx="17" cy="17" r="16.500" fill="#dd4b3e" />
      <path d="M2.700 8.700L10 21Q12 25 17 25L12 33A16.500 16.500 0 0 1 2.700 8.700Z" fill="#1fa362" />
      <path d="M17 9H31.500A16.500 16.500 0 0 1 15 33.400L24 20Q25 13 17 9Z" fill="#fdcf45" />
      <circle cx="17" cy="17" r="7.700" fill="#fff" />
      <circle cx="17" cy="17" r="6" fill="#4688f4" />
    </svg>
  ),
  matlab: (
    <svg width="36" height="34" viewBox="0 0 36 34">
      <path d="M0 20L12 14Q17 11 22 3L18 20L10 26Z" fill="#3c8fc4" />
      <path d="M10 26L14 24Q20 14 24 0Q30 14 36 26Q30 21 27 24L17 33Q14 27 10 26Z" fill="#e8742a" />
      <path d="M24 0Q24 16 14 30L10 26L14 24Q20 14 24 0Z" fill="#7b1d16" />
      <path d="M25 4Q29 14 27 24L20 30Q26 18 25 4Z" fill="#fbb03b" />
    </svg>
  ),
  remote: (
    <svg width="36" height="36" viewBox="0 0 36 36">
      <ellipse cx="20" cy="31" rx="11" ry="4.500" fill="#cfd0d4" />
      <path d="M16 24H25V31H16Z" fill="#a9abb0" />
      <path d="M7 0L35 4L32 28L6 24Z" fill="#d9dadf" />
      <path d="M9 3L32 6L30 25L8 21Z" fill="#0d22b8" />
      <path d="M21 4L32 6L30 25L26 24Z" fill="#3d5df0" />
      <rect x="0" y="8" width="28" height="11" fill="#e9f4ff" stroke="#2a78c8" />
      <path d="M2 11H26M2 13.500H26M5 16.500H22" stroke="#2a88dd" strokeWidth="1.500" strokeDasharray="2 1" />
    </svg>
  ),
  edge: (
    <svg width="36" height="36" viewBox="0 0 36 36">
      <circle cx="18" cy="18" r="18" fill="url(#edge)" />
      <path d="M1 13A18 18 0 0 1 36 17Q36 25 28 26Q20 26 21 22Q25 17 21 13Q12 6 1 13Z" fill="url(#edgeTop)" />
      <path d="M21 13Q24 17 22 20Q20 24 26 26Q33 26 36 20V30L24 36Q14 32 14 24Q14 16 21 13Z" fill="#1e1e1e" />
      <path d="M14 22Q14 31 24 32Q30 31 33 28A18 18 0 0 1 17 36Q8 28 14 22Z" fill="#0f56a6" />
    </svg>
  ),
  webex: (
    <svg width="36" height="36" viewBox="0 0 36 36">
      <circle cx="18" cy="18" r="18" fill="#07b4e6" />
      <path d="M30 5A18 18 0 0 1 4 30Q14 34 23 28Q32 20 30 5Z" fill="#0a5674" />
      <circle cx="18" cy="19" r="12" fill="#6fc04a" />
      <path d="M10 28Q3 19 9 12Q16 5 25 8Q27 18 22 24Q17 29 10 28Z" fill="#fff" />
    </svg>
  ),
};
const tray = {
  up: <svg width="20" height="12" viewBox="0 0 20 12" fill="none" stroke="#fff" strokeWidth="1.500"><path d="M1 10.500L10 1.500L19 10.500" /></svg>,
  cloud: (
    <svg width="24" height="17" viewBox="0 0 24 17">
      <path d="M5 9A7 7 0 0 1 18 5L20 9L12 14Z" fill="#8f8f8f" />
      <path d="M0 11A5 5 0 0 1 7 6L16 12L8 16H5Q0 16 0 11Z" fill="#c9c9c9" />
      <path d="M3 15L15 8Q18 6 21 8Q24 9 24 12Q24 16 20 16H5Z" fill="#fff" />
    </svg>
  ),
  battery: (
    <svg width="24" height="20" viewBox="0 0 24 20">
      <path d="M1 1.700H22V13H1Z" fill="none" stroke="#fff" strokeWidth="1.300" />
      <rect x="3" y="3.500" width="8" height="8" fill="#fff" />
      <circle cx="17" cy="12.500" r="6.500" fill="#0e8a16" />
      <path d="M17 8.500Q20 12 17 15Q14 12 17 8.500ZM17 11V17" fill="none" stroke="#fff" />
    </svg>
  ),
  wifi: (
    <svg width="19" height="19" viewBox="0 0 19 19" fill="none" stroke="#e8e8e8" strokeWidth="1.400">
      <path d="M1 18A17 17 0 0 1 18 1" opacity=".8" />
      <path d="M5.500 18A12.500 12.500 0 0 1 18 5.500M10 18A8 8 0 0 1 18 10M14 17Q14 14 18 14" />
      <circle cx="16.500" cy="16.500" r="1.500" fill="#fff" stroke="none" />
    </svg>
  ),
  sound: (
    <svg width="23" height="19" viewBox="0 0 23 19" fill="none" stroke="#fff" strokeWidth="1.300">
      <path d="M1 6.500H4L9 1V18L4 12.500H1Z" />
      <path d="M12.500 7Q14.500 9.500 12.500 12M15.500 4.500Q19 9.500 15.500 14.500" />
      <path d="M18.500 2Q24 9.500 18.500 17" stroke="#777" />
    </svg>
  ),
  note: (
    <svg width="25" height="25" viewBox="0 0 25 25">
      <path d="M0 1H24V18H15L12 22L8 18H0Z" fill="#fff" />
      <path d="M5 6.500H19M5 10.500H19M5 14.500H12" stroke="#1e1e1e" strokeWidth="1.400" />
      <path d="M19 13Q20 20 13 20Q16 25 21 23Q26 19 19 13Z" fill="#1e1e1e" stroke="#fff" strokeWidth="1.200" />
    </svg>
  ),
};

export default function App() {
  return (
    <Screen>
      <GlobalStyle />
      <Gradients />

      <TitleBar>
        <RhinoLogo s={24} />
        <TitleText>
          <Slot $w={464}>laserCut_Amro -</Slot>
          <Slot $w={30}>ng)</Slot>
        </TitleText>
        <WindowButtons>
          <svg width="16" height="16" viewBox="0 0 16 16" stroke="#000"><path d="M0 8.500H16" /></svg>
          <svg width="16" height="16" viewBox="0 0 16 16" stroke="#000" fill="none"><path d="M.500 4.500H11.500V15.500H.500ZM3.500 4V.500H15.500V12.500H12" /></svg>
          <svg width="16" height="16" viewBox="0 0 16 16" stroke="#000"><path d="M.500 .500L15.500 15.500M15.500 .500L.500 15.500" /></svg>
        </WindowButtons>
      </TitleBar>
      <MenuBar>
        {menus.map(([m, w]) => (
          <Slot key={m} $w={w}>{m}</Slot>
        ))}
      </MenuBar>

      <CommandRow>
        <VGrip $h={78} />
        <CommandBox>
          <History>
            <HistoryText>
              <HistoryLine>XRef objects read: 0</HistoryLine>
              <HistoryLine>
                <Slot $w={491}>Successfully read file</Slot>
                \laser cutting\lasercut 19 November\laserCut_Amro.dxf"
              </HistoryLine>
            </HistoryText>
            <ScrollArrows>
              <Chevron dir="up" s={11} />
              <Chevron dir="down" s={11} />
            </ScrollArrows>
          </History>
          <Prompt>
            <PromptText>
              Command:
              <Caret />
            </PromptText>
            <Spin>
              <SpinButton><Tri dir="up" /></SpinButton>
              <SpinButton><Tri dir="down" /></SpinButton>
            </Spin>
          </Prompt>
        </CommandBox>
      </CommandRow>

      <ToolbarArea>
        <VGrip $h={82} />
        <ToolbarBody>
          <TabRow>
            <ActiveTab>Standard</ActiveTab>
            <TabList>
              {tabs.map(([t, w]) => (
                <Slot key={t} $w={w}>{t}</Slot>
              ))}
              <Slot $w={60} $clip>New in V7</Slot>
            </TabList>
            <TabEnd>
              <TabMore><DoubleChevron /></TabMore>
              <TabGear><Gear color="#a3a4a8" w={1.900} /></TabGear>
            </TabEnd>
          </TabRow>
          <IconRow>
            {topRow.map(([k, more, w], i) => (
              <ToolCell key={i} $more={more} $w={w}>{k && topIcons[k]}</ToolCell>
            ))}
          </IconRow>
        </ToolbarBody>
      </ToolbarArea>

      <Main>
        <SideTools>
          <SideGrip><HGrip $w={83} /></SideGrip>
          <SideGrid>
            {sideIcons.map(([art, more], i) => (
              <ToolCell key={i} $more={more}><Svg>{art}</Svg></ToolCell>
            ))}
            <ToolCell><Svg><path d="M6 -4L10 0L6 4M11.500 -4L15.500 0L11.500 4" stroke="#222" strokeWidth="1.500" /></Svg></ToolCell>
          </SideGrid>
        </SideTools>
        <Center>
          <Views>
            <ViewPane name="Top" w={42} on><TopScene /></ViewPane>
            <ViewPane name="Perspective" w={106}><PerspectiveScene /></ViewPane>
            <ViewPane name="Front" w={54}><FrontScene /></ViewPane>
            <ViewPane name="Right" w={54}><RightScene /></ViewPane>
          </Views>
          <ViewTabs>Perspective</ViewTabs>
        </Center>
        <Props>
          <PropsTitle>
            Properties: View properties
            <HGrip />
          </PropsTitle>
          <PropsTabs>
            <PropsTab $on $w={65}><Wheel $d={22} /></PropsTab>
            <PropsTab $w={70}><Layers s={36} /></PropsTab>
            <PropsTab $w={61}><Material /></PropsTab>
            <PropsTab $w={74}><Tube /></PropsTab>
            <PropsTab $w={58}><Folder s={28} /></PropsTab>
            <PropsTab $w={74}><HelpWindow /></PropsTab>
            <PropsFill><Gear color="#c3cbe0" /></PropsFill>
          </PropsTabs>
          <PropsBody>
            <ModeRow>
              <Mode $on><Camera /></Mode>
              <Mode><Frame /></Mode>
            </ModeRow>
            <ScrollRow>
              <Sheet>
                {sections.map(([h, hh, rows]) => (
                  <React.Fragment key={h}>
                    <Heading $h={hh}>{h}</Heading>
                    {rows.map((r, i) => (
                      <PropertyRow key={i} row={r} />
                    ))}
                  </React.Fragment>
                ))}
              </Sheet>
              <Scrollbar>
                <ScrollEnd><Chevron dir="up" s={13} color="#9a9a9c" /></ScrollEnd>
                <Thumb />
                <ScrollEnd><Chevron dir="down" s={13} color="#8a8a8c" /></ScrollEnd>
              </Scrollbar>
            </ScrollRow>
          </PropsBody>
        </Props>
      </Main>

      <SnapBar>
        <VGrip $h={29} />
        <SnapList>
          {snaps.map(([s, w, dim]) => (
            <SnapItem key={s} $w={w} $dim={dim}>
              <Check $dim={dim} />
              {s}
            </SnapItem>
          ))}
        </SnapList>
      </SnapBar>
      <StatusBar>
        Maximize the active viewport
        <StatusEnd />
      </StatusBar>

      <Taskbar>
        <TaskCell $w={72}>
          <svg width="24" height="24" viewBox="0 0 24 24" fill="#fff">
            <path d="M0 3.300L10 2V11.500H0ZM11 1.800L24 0V11.500H11ZM0 12.500H10V22L0 20.700ZM11 12.500H24V24L11 22.200Z" />
          </svg>
        </TaskCell>
        <Search>
          <svg width="25" height="25" viewBox="0 0 25 25" fill="none" stroke="#fff" strokeWidth="1.600">
            <circle cx="16" cy="8.500" r="7.700" />
            <path d="M10.500 14L1 24" />
          </svg>
          Type here to search
        </Search>
        <TaskCell $w={73}>{task.view}</TaskCell>
        <GroupCell $w={77}>{task.files}</GroupCell>
        <TaskCell $w={75}>{task.chrome}</TaskCell>
        <TaskCell $w={75}>{task.matlab}</TaskCell>
        <TaskCell $w={75}>{task.remote}</TaskCell>
        <TaskCell $w={75}>{task.edge}</TaskCell>
        <TaskCell $w={77}>{task.webex}</TaskCell>
        <TaskCell $w={73} $on><RhinoLogo s={36} /></TaskCell>
        <Tray>
          <TrayItem $w={46}>{tray.up}</TrayItem>
          <TrayItem $w={49}>{tray.cloud}</TrayItem>
          <TrayItem $w={51} $drop={6}>{tray.battery}</TrayItem>
          <TrayItem $w={45} $drop={3}>{tray.wifi}</TrayItem>
          <TrayItem $w={46}>{tray.sound}</TrayItem>
          <TrayItem $w={42}>DEU</TrayItem>
          <Clock>
            01:08
            <br />
            05/12/2020
          </Clock>
          <TrayItem $w={16} />
          <TrayItem $w={54} $drop={3}>{tray.note}</TrayItem>
          <DesktopEdge />
        </Tray>
      </Taskbar>

      <ContextMenu />
    </Screen>
  );
}
